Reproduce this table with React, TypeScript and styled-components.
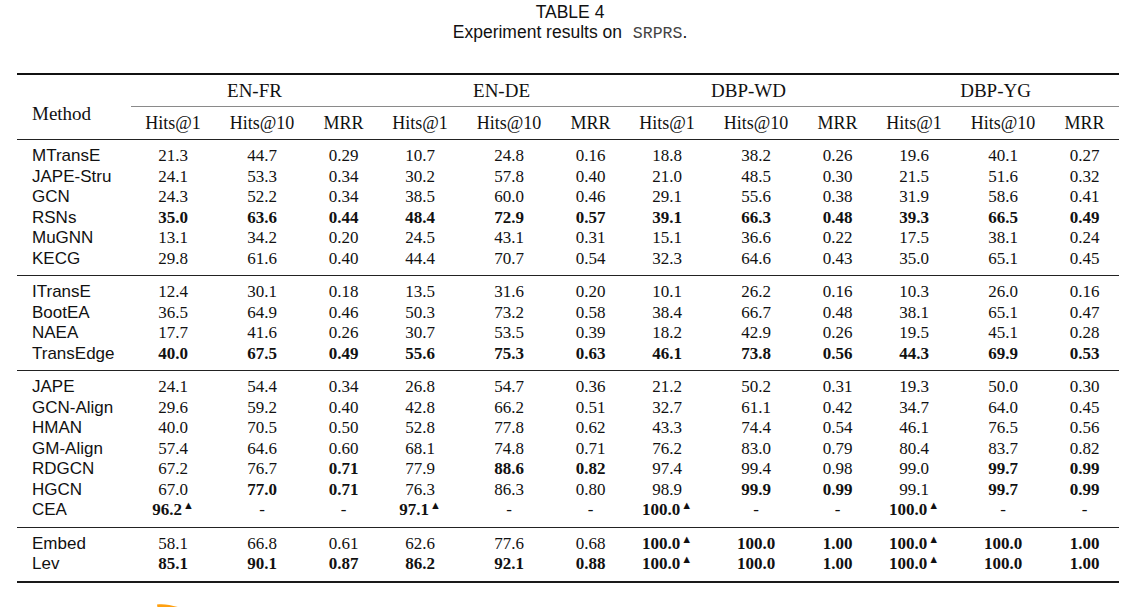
import React from 'react';
import styled, { createGlobalStyle } from 'styled-components';

const GlobalStyle = createGlobalStyle`
  html, body {
    margin: 0;
    padding: 0;
    background: #ffffff;
  }
  body {
    width: 1140px;
    height: 607px;
    overflow: hidden;
    color: #000;
  }
`;

const Page = styled.div`
  display: flex;
  flex-direction: column;
  padding-top: 2px;
`;

const Caption = styled.div`
  font-family: 'Liberation Sans', Arial, sans-serif;
  font-size: 17.5px;
  line-height: 20px;
  text-align: center;
  color: #111;
`;

const Mono = styled.span`
  font-family: 'Liberation Mono', 'Courier New', monospace;
  font-size: 16.5px;
  color: #444;
  margin-left: 6px;
`;

const Table = styled.table`
  margin: 29px 0 0 17px;
  width: 1102px;
  border-collapse: collapse;
  table-layout: fixed;
  font-family: 'Liberation Serif', 'Times New Roman', serif;
  color: #111;
`;

const Col = styled.col<{ $w: number }>`
  width: ${(p) => p.$w}px;
`;

const Head = styled.thead`
  border-top: 2px solid #111;
`;

const GroupHead = styled.th`
  height: 31px;
  padding: 0;
  font-size: 19px;
  font-weight: normal;
  text-align: center;
  border-bottom: 1px solid #8a8a8a;
`;

const MethodHead = styled.th`
  padding: 14px 0 0 15px;
  font-size: 19px;
  font-weight: normal;
  text-align: left;
  vertical-align: middle;
  border-bottom: 1px solid #222;
`;

const SubHead = styled.th`
  height: 32px;
  padding: 0;
  font-size: 18px;
  font-weight: normal;
  text-align: center;
  border-bottom: 1px solid #222;
`;

const Group = styled.tbody<{ $last?: boolean }>`
  border-top: 1px solid #222;
  border-bottom: ${(p) => (p.$last ? '2px solid #1a1a1a' : 'none')};
  tr:first-child td {
    padding-top: 6px;
  }
  tr:last-child td {
    padding-bottom: 6px;
  }
`;

const Name = styled.td`
  padding: 0 0 0 15px;
  font-family: 'Liberation Sans', Arial, sans-serif;
  font-size: 17px;
  line-height: 20.5px;
  text-align: left;
  white-space: nowrap;
`;

const Cell = styled.td<{ $bold?: boolean }>`
  padding: 0;
  font-size: 17px;
  line-height: 20.5px;
  text-align: center;
  font-weight: ${(p) => (p.$bold ? 'bold' : 'normal')};
  white-space: nowrap;
`;

const Mark = styled.span`
  display: inline-block;
  font-size: 11px;
  line-height: 0;
  vertical-align: 6px;
  margin-left: 1px;
`;

const Stroke = styled.svg`
  display: block;
  margin: 20px 0 0 157px;
`;

const datasets = ['EN-FR', 'EN-DE', 'DBP-WD', 'DBP-YG'];
const metrics = ['Hits@1', 'Hits@10', 'MRR'];

// '*' = bold, '^' = triangle mark
const groups: string[][] = [
  [
    'MTransE 21.3 44.7 0.29 10.7 24.8 0.16 18.8 38.2 0.26 19.6 40.1 0.27',
    'JAPE-Stru 24.1 53.3 0.34 30.2 57.8 0.40 21.0 48.5 0.30 21.5 51.6 0.32',
    'GCN 24.3 52.2 0.34 38.5 60.0 0.46 29.1 55.6 0.38 31.9 58.6 0.41',
    'RSNs *35.0 *63.6 *0.44 *48.4 *72.9 *0.57 *39.1 *66.3 *0.48 *39.3 *66.5 *0.49',
    'MuGNN 13.1 34.2 0.20 24.5 43.1 0.31 15.1 36.6 0.22 17.5 38.1 0.24',
    'KECG 29.8 61.6 0.40 44.4 70.7 0.54 32.3 64.6 0.43 35.0 65.1 0.45',
  ],
  [
    'ITransE 12.4 30.1 0.18 13.5 31.6 0.20 10.1 26.2 0.16 10.3 26.0 0.16',
    'BootEA 36.5 64.9 0.46 50.3 73.2 0.58 38.4 66.7 0.48 38.1 65.1 0.47',
    'NAEA 17.7 41.6 0.26 30.7 53.5 0.39 18.2 42.9 0.26 19.5 45.1 0.28',
    'TransEdge *40.0 *67.5 *0.49 *55.6 *75.3 *0.63 *46.1 *73.8 *0.56 *44.3 *69.9 *0.53',
  ],
  [
    'JAPE 24.1 54.4 0.34 26.8 54.7 0.36 21.2 50.2 0.31 19.3 50.0 0.30',
    'GCN-Align 29.6 59.2 0.40 42.8 66.2 0.51 32.7 61.1 0.42 34.7 64.0 0.45',
    'HMAN 40.0 70.5 0.50 52.8 77.8 0.62 43.3 74.4 0.54 46.1 76.5 0.56',
    'GM-Align 57.4 64.6 0.60 68.1 74.8 0.71 76.2 83.0 0.79 80.4 83.7 0.82',
    'RDGCN 67.2 76.7 *0.71 77.9 *88.6 *0.82 97.4 99.4 0.98 99.0 *99.7 *0.99',
    'HGCN 67.0 *77.0 *0.71 76.3 86.3 0.80 98.9 *99.9 *0.99 99.1 *99.7 *0.99',
    'CEA *96.2^ - - *97.1^ - - *100.0^ - - *100.0^ - -',
  ],
  [
    'Embed 58.1 66.8 0.61 62.6 77.6 0.68 *100.0^ *100.0 *1.00 *100.0^ *100.0 *1.00',
    'Lev *85.1 *90.1 *0.87 *86.2 *92.1 *0.88 *100.0^ *100.0 *1.00 *100.0^ *100.0 *1.00',
  ],
];

const Value: React.FC<{ raw: string }> = ({ raw }) => {
  const bold = raw.startsWith('*');
  const marked = raw.endsWith('^');
  const text = raw.replace('*', '').replace('^', '');
  return (
    <Cell $bold={bold}>
      {text}
      {marked && <Mark>▲</Mark>}
    </Cell>
  );
};

const App: React.FC = () => {
  return (
    <Page>
      <GlobalStyle />
      <Caption>TABLE 4</Caption>
      <Caption>
        Experiment results on <Mono>SRPRS</Mono>.
      </Caption>

      <Table>
        <colgroup>
          <Col $w={114} />
          {datasets.map((d) => (
            <React.Fragment key={d}>
              <Col $w={84} />
              <Col $w={94} />
              <Col $w={69} />
            </React.Fragment>
          ))}
        </colgroup>
        <Head>
          <tr>
            <MethodHead rowSpan={2}>Method</MethodHead>
            {datasets.map((d) => (
              <GroupHead key={d} colSpan={3}>
                {d}
              </GroupHead>
            ))}
          </tr>
          <tr>
            {datasets.map((d) =>
              metrics.map((m) => <SubHead key={d + m}>{m}</SubHead>)
            )}
          </tr>
        </Head>
        {groups.map((rows, gi) => (
          <Group key={gi} $last={gi === groups.length - 1}>
            {rows.map((line) => {
              const [name, ...values] = line.split(' ');
              return (
                <tr key={name}>
                  <Name>{name}</Name>
                  {values.map((v, i) => (
                    <Value key={i} raw={v} />
                  ))}
                </tr>
              );
            })}
          </Group>
        ))}
      </Table>

      <Stroke width="28" height="8" viewBox="0 0 28 8">
        <path d="M0 1.5 C 8 0.5, 16 2.5, 26 5.5 L 26 6.5 C 16 5, 8 5, 0.5 4.5 Z" fill="#ffa010" />
      </Stroke>
    </Page>
  );
};

export default App;
